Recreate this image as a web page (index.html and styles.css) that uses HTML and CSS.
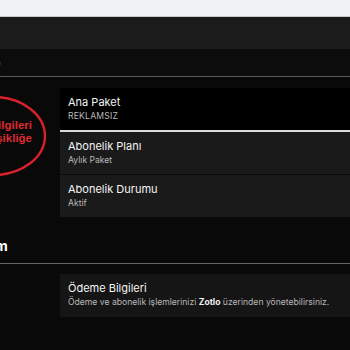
FILE: index.html
```html
<!DOCTYPE html>
<html lang="tr">
<head>
    <meta charset="UTF-8">
    <meta name="viewport" content="width=device-width, initial-scale=1.0">
    <title>Abonelik</title>
    <link rel="stylesheet" href="styles.css">
</head>
<body>
    <div class="browser-bar"></div>
    <header class="topbar"></header>
    <nav class="tabs">
        <span class="tab">o</span>
    </nav>

    <main class="content">
        <section class="group">
            <div class="side">
                <div class="note">
                    <svg class="note-ring" width="100" height="90" viewBox="0 0 100 90">
                        <ellipse cx="45" cy="45" rx="52" ry="39" fill="none" stroke="#d9212b" stroke-width="2.4"/>
                    </svg>
                    <div class="note-text">Bilgileri<br>Değişikliğe</div>
                </div>
            </div>
            <div class="cards">
                <div class="card card-active">
                    <div class="card-title">Ana Paket</div>
                    <div class="card-sub caps">REKLAMSIZ</div>
                </div>
                <div class="card">
                    <div class="card-title">Abonelik Planı</div>
                    <div class="card-sub">Aylık Paket</div>
                </div>
                <div class="card">
                    <div class="card-title">Abonelik Durumu</div>
                    <div class="card-sub">Aktif</div>
                </div>
            </div>
        </section>

        <h2 class="group-title"><span>m</span></h2>

        <section class="group group-payment">
            <div class="side"></div>
            <div class="cards">
                <div class="card card-muted">
                    <div class="card-title">Ödeme Bilgileri</div>
                    <div class="card-sub">Ödeme ve abonelik işlemlerinizi <b>Zotlo</b> üzerinden yönetebilirsiniz.</div>
                </div>
            </div>
        </section>
    </main>
</body>
</html>
```

FILE: styles.css
```css
* {
    margin: 0;
    padding: 0;
    box-sizing: border-box;
}

html,
body {
    height: 100%;
}

body {
    background: #090909;
    font-family: Inter, 'Liberation Sans', sans-serif;
    color: #f2f2f2;
    overflow: hidden;
}

.browser-bar {
    height: 17px;
    background: #f1f2f4;
    border-bottom: 1px solid #c9cacd;
}

.topbar {
    height: 32px;
    background: #1b1b1b;
}

.tabs {
    height: 28px;
    background: #0c0c0c;
    border-bottom: 1px solid #5a5a5a;
    display: flex;
    align-items: center;
}

.tab {
    margin-left: -6px;
    font-size: 11px;
    color: #b5b5b5;
}

.content {
    padding-top: 11px;
}

.group {
    display: flex;
}

.side {
    width: 60px;
    flex-shrink: 0;
    position: relative;
}

.cards {
    flex: 1;
    display: flex;
    flex-direction: column;
}

.card {
    background: #1a1a1a;
    padding: 7px 8px 8px;
    border-bottom: 1px solid #0a0a0a;
}

.card-active {
    background: #000;
    border-bottom: 2px solid #dcdcdc;
}

.card-muted {
    background: #151515;
    padding: 7px 8px 9px;
    border-bottom: none;
}

.card-title {
    font-size: 11px;
    line-height: 14px;
    color: #f4f4f4;
}

.card-sub {
    margin-top: 2px;
    font-size: 8.6px;
    line-height: 11px;
    color: #b9b9b9;
    white-space: nowrap;
}

.card-sub b {
    color: #f2f2f2;
    font-weight: 700;
}

.caps {
    letter-spacing: 0.2px;
}

.group-title {
    margin-top: 19px;
    padding-bottom: 8px;
    border-bottom: 1px solid #666;
    font-size: 14px;
    line-height: 18px;
    font-weight: 700;
    color: #fff;
}

.group-title span {
    display: inline-block;
    margin-left: -5px;
}

.group-payment {
    padding-top: 10px;
}

/* red annotation drawn over the screenshot */
.note {
    position: absolute;
    left: -52px;
    top: 3px;
    width: 100px;
    height: 90px;
}

.note-ring {
    position: absolute;
    left: 0;
    top: 0;
}

.note-text {
    position: absolute;
    right: 16px;
    top: 28px;
    text-align: right;
    font-family: 'Liberation Sans', Arial, sans-serif;
    font-size: 11.5px;
    line-height: 12.5px;
    font-weight: 700;
    color: #dd2a33;
}
```
